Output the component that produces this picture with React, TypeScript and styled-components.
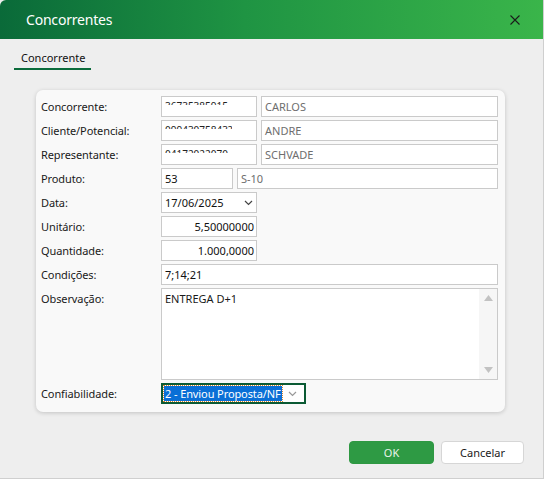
import React from "react";
import styled, { createGlobalStyle } from "styled-components";

const GlobalStyle = createGlobalStyle`
  html, body {
    margin: 0;
    padding: 0;
    background: #eeeeee;
  }
  body {
    font-family: "Segoe UI", "Noto Sans", "Open Sans", sans-serif;
    color: #1a1a1a;
  }
`;

const Window = styled.div`
  width: 544px;
  height: 479px;
  box-sizing: border-box;
  background: #eeeeee;
  border-right: 1px solid #cfcfcf;
  border-bottom: 1px solid #cfcfcf;
  display: flex;
  flex-direction: column;
  overflow: hidden;
`;

const TitleBar = styled.div`
  height: 39px;
  flex: none;
  display: flex;
  align-items: center;
  justify-content: space-between;
  padding: 0 16px 0 26px;
  background: linear-gradient(90deg, #0a6a39 0%, #1f9443 45%, #3ab54a 100%);
  border-top-left-radius: 6px;
`;

const Title = styled.div`
  color: #ffffff;
  font-size: 14px;
  letter-spacing: -0.2px;
`;

const CloseButton = styled.button`
  width: 24px;
  height: 24px;
  border: 0;
  padding: 0;
  background: transparent;
  display: flex;
  align-items: center;
  justify-content: center;
`;

const TabStrip = styled.div`
  display: flex;
  padding: 11px 0 0 14px;
  height: 28px;
  box-sizing: border-box;
  flex: none;
`;

const Tab = styled.div`
  font-size: 11px;
  padding: 0 6px 1px 7px;
  border-bottom: 2px solid #0b6b3b;
  height: 17px;
  line-height: 15px;
  color: #111;
`;

const Panel = styled.div`
  margin: 23px 0 0 36px;
  width: 469px;
  box-sizing: border-box;
  padding: 6px 7px 8px 5px;
  background: #f9f9f9;
  border-radius: 7px;
  box-shadow: 0 1px 4px rgba(0, 0, 0, 0.18);
  display: flex;
  flex-direction: column;
  gap: 3px;
`;

const Row = styled.div<{ $h?: number }>`
  display: grid;
  grid-template-columns: 120px 1fr;
  height: ${(p) => p.$h ?? 21}px;
  align-items: ${(p) => (p.$h ? "start" : "center")};
`;

const Label = styled.div`
  font-size: 11px;
  letter-spacing: -0.1px;
  line-height: 21px;
  white-space: nowrap;
`;

const Fields = styled.div`
  display: flex;
  gap: 4px;
  height: 100%;
`;

const Field = styled.div<{ $w?: number; $muted?: boolean; $right?: boolean }>`
  box-sizing: border-box;
  height: 100%;
  ${(p) => (p.$w ? `width: ${p.$w}px; flex: none;` : "flex: 1;")}
  background: #ffffff;
  border: 1px solid #cacaca;
  font-size: 11px;
  line-height: 19px;
  padding: 0 ${(p) => (p.$right ? 2 : 3)}px 0 3px;
  color: ${(p) => (p.$muted ? "#6e6e6e" : "#111")};
  display: flex;
  align-items: center;
  justify-content: ${(p) => (p.$right ? "flex-end" : "space-between")};
  white-space: nowrap;
  overflow: hidden;
  position: relative;
`;

/* the code digits are drawn mostly hidden in the original: only their tops show */
const Clipped = styled.span`
  position: absolute;
  left: 3px;
  top: 4px;
  height: 4px;
  overflow: hidden;
  font-size: 10px;
  line-height: 11px;
  color: #222;
`;

const Memo = styled.div`
  box-sizing: border-box;
  height: 92px;
  background: #fff;
  border: 1px solid #cacaca;
  display: flex;
`;

const MemoText = styled.div`
  flex: 1;
  font-size: 11px;
  padding: 1px 3px;
  line-height: 18px;
`;

const ScrollTrack = styled.div`
  width: 18px;
  background: #f6f6f6;
  display: flex;
  flex-direction: column;
  justify-content: space-between;
  align-items: center;
  padding: 6px 0;
  box-sizing: border-box;
`;

const Select = styled.div`
  box-sizing: border-box;
  width: 145px;
  height: 21px;
  background: #fff;
  border: 2px solid #0b5a34;
  display: flex;
  align-items: center;
  justify-content: space-between;
  padding: 0 7px 0 1px;
`;

const Selected = styled.span`
  background: #0a6fd6;
  color: #fff;
  font-size: 11px;
  line-height: 15px;
  padding: 0 1px;
  letter-spacing: -0.1px;
  white-space: nowrap;
  outline: 1px dotted #d9822b;
`;

const Footer = styled.div`
  margin-top: auto;
  display: flex;
  justify-content: flex-end;
  gap: 7px;
  padding: 0 19px 14px 0;
`;

const Button = styled.button<{ $primary?: boolean }>`
  width: ${(p) => (p.$primary ? 85 : 83)}px;
  height: 23px;
  border-radius: 4px;
  font-family: inherit;
  font-size: 11px;
  border: 1px solid ${(p) => (p.$primary ? "#2e9842" : "#d6d6d6")};
  background: ${(p) => (p.$primary ? "#2e9a44" : "#ffffff")};
  color: ${(p) => (p.$primary ? "#e8f4ea" : "#1a1a1a")};
  padding: 0;
`;

const Chevron = ({ color = "#444" }: { color?: string }) => (
  <svg width="9" height="6" viewBox="0 0 9 6">
    <path d="M1 1 L4.5 4.5 L8 1" fill="none" stroke={color} strokeWidth="1.2" />
  </svg>
);

const Arrow = ({ up }: { up?: boolean }) => (
  <svg width="9" height="6" viewBox="0 0 9 6">
    <path d={up ? "M0 6 L4.5 0 L9 6 Z" : "M0 0 L4.5 6 L9 0 Z"} fill="#c2c2c2" />
  </svg>
);

const people = [
  { label: "Concorrente:", code: "36735385915", name: "CARLOS" },
  { label: "Cliente/Potencial:", code: "09943075843?", name: "ANDRE" },
  { label: "Representante:", code: "04172022070", name: "SCHVADE" },
];

export default function App() {
  return (
    <>
      <GlobalStyle />
      <Window>
        <TitleBar>
          <Title>Concorrentes</Title>
          <CloseButton aria-label="Fechar">
            <svg width="10" height="10" viewBox="0 0 10 10">
              <path d="M0.5 0.5 L9.5 9.5 M9.5 0.5 L0.5 9.5" stroke="#1b1b1b" strokeWidth="1.1" />
            </svg>
          </CloseButton>
        </TitleBar>
        <TabStrip>
          <Tab>Concorrente</Tab>
        </TabStrip>
        <Panel>
          {people.map((p) => (
            <Row key={p.label}>
              <Label>{p.label}</Label>
              <Fields>
                <Field $w={96}>
                  <Clipped>{p.code}</Clipped>
                </Field>
                <Field $muted>{p.name}</Field>
              </Fields>
            </Row>
          ))}
          <Row>
            <Label>Produto:</Label>
            <Fields>
              <Field $w={72}>53</Field>
              <Field $muted>S-10</Field>
            </Fields>
          </Row>
          <Row>
            <Label>Data:</Label>
            <Fields>
              <Field $w={96}>
                17/06/2025
                <Chevron />
              </Field>
            </Fields>
          </Row>
          <Row>
            <Label>Unitário:</Label>
            <Fields>
              <Field $w={96} $right>5,50000000</Field>
            </Fields>
          </Row>
          <Row>
            <Label>Quantidade:</Label>
            <Fields>
              <Field $w={96} $right>1.000,0000</Field>
            </Fields>
          </Row>
          <Row>
            <Label>Condições:</Label>
            <Fields>
              <Field>7;14;21</Field>
            </Fields>
          </Row>
          <Row $h={92}>
            <Label>Observação:</Label>
            <Memo>
              <MemoText>ENTREGA D+1</MemoText>
              <ScrollTrack>
                <Arrow up />
                <Arrow />
              </ScrollTrack>
            </Memo>
          </Row>
          <Row>
            <Label>Confiabilidade:</Label>
            <Fields>
              <Select>
                <Selected>2 - Enviou Proposta/NF</Selected>
                <Chevron color="#999" />
              </Select>
            </Fields>
          </Row>
        </Panel>
        <Footer>
          <Button $primary>OK</Button>
          <Button>Cancelar</Button>
        </Footer>
      </Window>
    </>
  );
}
